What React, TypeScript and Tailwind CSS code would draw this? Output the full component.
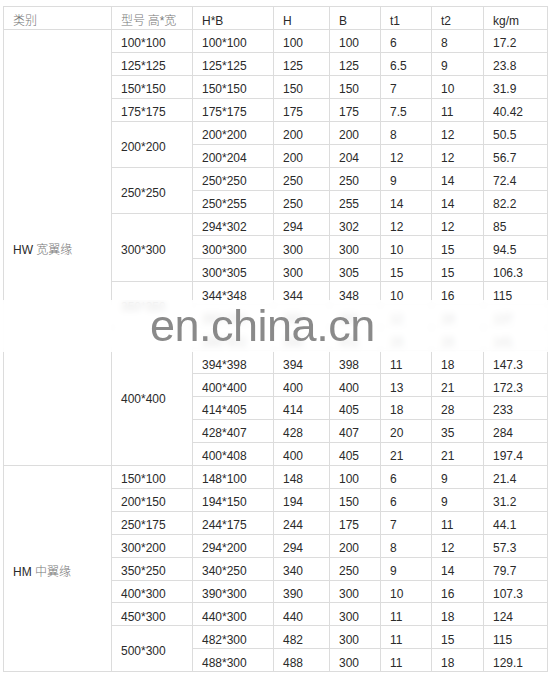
import React from 'react';

type Row = { hb: string; h: string; b: string; t1: string; t2: string; kg: string };
type Group = { size: string; rows: Row[] };
type Category = { code: string; name: string; groups: Group[] };

const r = (hb: string, t1: string, t2: string, kg: string): Row => {
  const [h, b] = hb.split('*');
  return { hb, h, b, t1, t2, kg };
};

const DATA: Category[] = [
  {
    code: 'HW',
    name: '宽翼缘',
    groups: [
      { size: '100*100', rows: [r('100*100', '6', '8', '17.2')] },
      { size: '125*125', rows: [r('125*125', '6.5', '9', '23.8')] },
      { size: '150*150', rows: [r('150*150', '7', '10', '31.9')] },
      { size: '175*175', rows: [r('175*175', '7.5', '11', '40.42')] },
      { size: '200*200', rows: [r('200*200', '8', '12', '50.5'), r('200*204', '12', '12', '56.7')] },
      { size: '250*250', rows: [r('250*250', '9', '14', '72.4'), r('250*255', '14', '14', '82.2')] },
      {
        size: '300*300',
        rows: [r('294*302', '12', '12', '85'), r('300*300', '10', '15', '94.5'), r('300*305', '15', '15', '106.3')],
      },
      { size: '350*350', rows: [r('344*348', '10', '16', '115'), r('350*350', '12', '19', '137')] },
      {
        size: '400*400',
        rows: [
          r('388*402', '15', '15', '141'),
          r('394*398', '11', '18', '147.3'),
          r('400*400', '13', '21', '172.3'),
          r('414*405', '18', '28', '233'),
          r('428*407', '20', '35', '284'),
          { hb: '400*408', h: '400', b: '405', t1: '21', t2: '21', kg: '197.4' },
        ],
      },
    ],
  },
  {
    code: 'HM',
    name: '中翼缘',
    groups: [
      { size: '150*100', rows: [r('148*100', '6', '9', '21.4')] },
      { size: '200*150', rows: [r('194*150', '6', '9', '31.2')] },
      { size: '250*175', rows: [r('244*175', '7', '11', '44.1')] },
      { size: '300*200', rows: [r('294*200', '8', '12', '57.3')] },
      { size: '350*250', rows: [r('340*250', '9', '14', '79.7')] },
      { size: '400*300', rows: [r('390*300', '10', '16', '107.3')] },
      { size: '450*300', rows: [r('440*300', '11', '18', '124')] },
      { size: '500*300', rows: [r('482*300', '11', '15', '115'), r('488*300', '11', '18', '129.1')] },
    ],
  },
];

const cell = 'border border-[#dcdcdc] pl-[9px] pr-1 pt-[5px] pb-0 align-middle whitespace-nowrap';
const cjk = "font-['Noto_Sans_CJK_SC',sans-serif] text-[#777] font-light";

export default function App() {
  return (
    <div className="relative w-[551px] h-[679px] bg-white pt-[6px] pl-[3px] overflow-hidden font-['Liberation_Sans',Arial,sans-serif] text-[12px] text-[#2a2a2a] leading-none">
      <table className="border-collapse table-fixed w-[544px]">
        <colgroup>
          <col className="w-[108px]" />
          <col className="w-[81px]" />
          <col className="w-[81px]" />
          <col className="w-[56px]" />
          <col className="w-[51px]" />
          <col className="w-[51px]" />
          <col className="w-[52px]" />
          <col className="w-[64px]" />
        </colgroup>
        <thead>
          <tr className="h-[23px]">
            <td className={cell}>
              <span className={cjk}>类别</span>
            </td>
            <td className={cell}>
              <span className={cjk}>型号 高</span>
              <span className="text-[#777]">*</span>
              <span className={cjk}>宽</span>
            </td>
            <td className={cell}>H*B</td>
            <td className={cell}>H</td>
            <td className={cell}>B</td>
            <td className={cell}>t1</td>
            <td className={cell}>t2</td>
            <td className={cell}>kg/m</td>
          </tr>
        </thead>
        <tbody>
          {DATA.map((cat) => {
            const total = cat.groups.reduce((n, g) => n + g.rows.length, 0);
            return cat.groups.map((g, gi) =>
              g.rows.map((row, ri) => (
                <tr key={cat.code + row.hb + ri} className="h-[22.95px]">
                  {gi === 0 && ri === 0 && (
                    <td className={cell} rowSpan={total}>
                      {cat.code} <span className={cjk}>{cat.name}</span>
                    </td>
                  )}
                  {ri === 0 && (
                    <td className={cell} rowSpan={g.rows.length}>
                      {g.size}
                    </td>
                  )}
                  <td className={cell}>{row.hb}</td>
                  <td className={cell}>{row.h}</td>
                  <td className={cell}>{row.b}</td>
                  <td className={cell}>{row.t1}</td>
                  <td className={cell}>{row.t2}</td>
                  <td className={cell}>{row.kg}</td>
                </tr>
              ))
            );
          })}
        </tbody>
      </table>

      {/* watermark band over the table */}
      <div className="absolute left-0 top-[300px] w-[551px] h-[52px] bg-white/85 backdrop-blur-[3px] flex items-center">
        <span className="ml-[150px] -mt-[2px] text-[45px] leading-none text-[#8a8a8a] font-['Liberation_Sans',Arial,sans-serif] tracking-[-0.5px]">
          en.china.cn
        </span>
      </div>
    </div>
  );
}
